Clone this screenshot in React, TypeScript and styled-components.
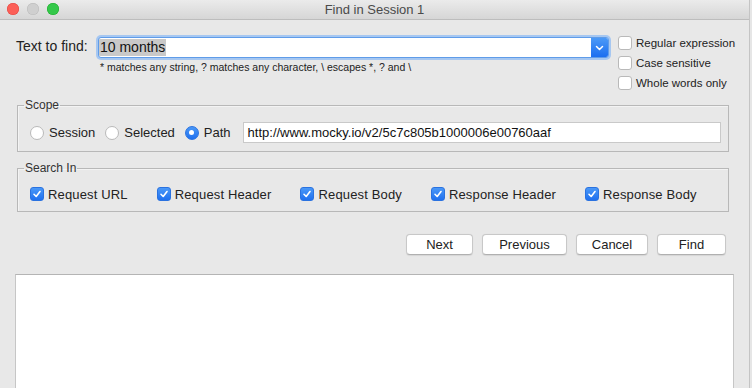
import React from 'react'
import styled, { createGlobalStyle } from 'styled-components'

const GlobalStyle = createGlobalStyle`
  html, body {
    margin: 0;
    padding: 0;
    background: #e6e6e6;
  }
  body {
    font-family: "Liberation Sans", Arial, sans-serif;
    color: #222;
  }
`

const Window = styled.div`
  width: 749px;
  height: 388px;
  display: flex;
  flex-direction: column;
  background: #e8e8e8;
  border-right: 1px solid #c4c4c4;
  overflow: hidden;
`

const TitleBar = styled.div`
  position: relative;
  height: 19px;
  flex: none;
  display: flex;
  align-items: center;
  justify-content: center;
  background: linear-gradient(#ebebeb, #d6d6d6);
  border-bottom: 1px solid #bdbdbd;

  .lights {
    position: absolute;
    left: 7px;
    top: 3px;
    display: flex;
    gap: 8px;
  }
`

const Light = styled.span<{ $color: string; $edge: string }>`
  width: 12px;
  height: 12px;
  border-radius: 50%;
  background: ${(p) => p.$color};
  box-shadow: inset 0 0 0 0.5px ${(p) => p.$edge};
`

const Title = styled.div`
  font-size: 13px;
  color: #4a4a4a;
`

const Body = styled.div`
  flex: 1;
  display: flex;
  flex-direction: column;
  padding: 15px 15px 0 15px;
  min-height: 0;
`

const TopRow = styled.div`
  height: 63px;
  display: flex;
  align-items: flex-start;
  flex: none;
  white-space: nowrap;
`

const FindLabel = styled.div`
  font-size: 14px;
  width: 80px;
  flex: none;
  padding: 3px 0 0 1px;
  color: #222;
`

const FieldColumn = styled.div`
  width: 515px;
  flex: none;
  display: flex;
  flex-direction: column;
`

const Combo = styled.div`
  height: 19px;
  margin: 2px;
  display: flex;
  align-items: stretch;
  background: #fff;
  border: 1px solid #5f9ce9;
  border-radius: 3px;
  box-shadow: 0 0 0 2px #a6c7f1;
  overflow: hidden;
`

const ComboText = styled.div`
  flex: 1;
  display: flex;
  align-items: center;

  span {
    font-size: 14px;
    line-height: 17px;
    background: #c9c9c9;
    color: #111;
    padding: 0 1px;
  }
`

const ComboButton = styled.div`
  width: 17px;
  display: flex;
  align-items: center;
  justify-content: center;
  background: linear-gradient(#4c9af7, #1b6ef0);
`

const Hint = styled.div`
  font-size: 10.5px;
  line-height: 12px;
  margin: 1px 0 0 4px;
  color: #222;
`

const Options = styled.div`
  margin: -2px 0 0 7px;
  flex: none;
  display: flex;
  flex-direction: column;
`

const OptionRow = styled.label`
  height: 20px;
  display: flex;
  align-items: center;
  gap: 4px;
  font-size: 11.5px;
  color: #222;
`

const Box = styled.span<{ $checked?: boolean }>`
  width: 14px;
  height: 14px;
  flex: none;
  box-sizing: border-box;
  border-radius: 3px;
  display: flex;
  align-items: center;
  justify-content: center;
  background: ${(p) => (p.$checked ? 'linear-gradient(#4a98f7, #1f70ef)' : '#fff')};
  border: 1px solid ${(p) => (p.$checked ? '#2a72e0' : '#b9b9b9')};
`

const Group = styled.fieldset<{ $top?: number }>`
  margin: ${(p) => p.$top ?? 0}px 5px 0 2px;
  padding: 10px 7px 8px 12px;
  border: 1px solid #b8b8b8;
  box-shadow: inset 1px 1px 0 #f3f3f3;
  flex: none;

  legend {
    font-size: 12px;
    line-height: 14px;
    padding: 0 1px;
    margin-left: -6px;
    color: #333;
  }
`

const ScopeRow = styled.div`
  display: flex;
  align-items: center;
  height: 21px;
`

const RadioItem = styled.label`
  display: flex;
  align-items: center;
  gap: 5px;
  font-size: 13px;
  margin-right: 10px;
  color: #222;
`

const Radio = styled.span<{ $on?: boolean }>`
  width: 14px;
  height: 14px;
  box-sizing: border-box;
  border-radius: 50%;
  display: flex;
  align-items: center;
  justify-content: center;
  background: ${(p) => (p.$on ? 'linear-gradient(#4a98f7, #1f70ef)' : '#fff')};
  border: 1px solid ${(p) => (p.$on ? '#2a72e0' : '#b9b9b9')};

  &::after {
    content: '';
    display: ${(p) => (p.$on ? 'block' : 'none')};
    width: 5px;
    height: 5px;
    border-radius: 50%;
    background: #fff;
  }
`

const PathField = styled.div`
  flex: 1;
  height: 21px;
  box-sizing: border-box;
  margin-left: 2px;
  padding-left: 4px;
  display: flex;
  align-items: center;
  background: #fff;
  border: 1px solid #c9c9c9;
  font-size: 13px;
  color: #111;
`

const CheckRow = styled.div`
  display: flex;
  align-items: center;
  gap: 29px;
  height: 18px;
`

const CheckItem = styled.label`
  display: flex;
  align-items: center;
  gap: 4px;
  font-size: 13px;
  letter-spacing: 0.15px;
  color: #222;
`

const ButtonRow = styled.div`
  display: flex;
  justify-content: flex-end;
  gap: 9px;
  margin: 22px 8px 0 0;
  flex: none;
`

const Button = styled.button<{ $w: number }>`
  width: ${(p) => p.$w}px;
  height: 21px;
  padding: 0;
  font-family: inherit;
  font-size: 13px;
  color: #222;
  background: #fff;
  border: 1px solid #c8c8c8;
  border-bottom-color: #b0b0b0;
  border-radius: 4px;
  box-shadow: 0 0.5px 1px rgba(0, 0, 0, 0.08);
`

const Output = styled.div`
  flex: 1;
  margin-top: 19px;
  background: #fff;
  border: 1px solid #c6c6c6;
  border-top-color: #b4b4b4;
  border-bottom: none;
`

const Check = () => (
  <svg width="10" height="10" viewBox="0 0 10 10">
    <path d="M2 5.3 L4.2 7.5 L8 2.5" stroke="#fff" strokeWidth="1.6" fill="none" strokeLinecap="round" strokeLinejoin="round" />
  </svg>
)

const searchIn = ['Request URL', 'Request Header', 'Request Body', 'Response Header', 'Response Body']
const buttons: [string, number][] = [
  ['Next', 67],
  ['Previous', 85],
  ['Cancel', 72],
  ['Find', 69],
]

export default function App() {
  return (
    <>
      <GlobalStyle />
      <Window>
        <TitleBar>
          <div className="lights">
            <Light $color="#fc5f57" $edge="#e0443e" />
            <Light $color="#cfcfcf" $edge="#b9b9b9" />
            <Light $color="#34c84a" $edge="#1aab29" />
          </div>
          <Title>Find in Session 1</Title>
        </TitleBar>
        <Body>
          <TopRow>
            <FindLabel>Text to find:</FindLabel>
            <FieldColumn>
              <Combo>
                <ComboText>
                  <span>10 months</span>
                </ComboText>
                <ComboButton>
                  <svg width="9" height="6" viewBox="0 0 9 6">
                    <path d="M1.5 1.5 L4.5 4.5 L7.5 1.5" stroke="#fff" strokeWidth="1.5" fill="none" strokeLinecap="round" strokeLinejoin="round" />
                  </svg>
                </ComboButton>
              </Combo>
              <Hint>* matches any string, ? matches any character, \ escapes *, ? and \</Hint>
            </FieldColumn>
            <Options>
              <OptionRow>
                <Box />
                Regular expression
              </OptionRow>
              <OptionRow>
                <Box />
                Case sensitive
              </OptionRow>
              <OptionRow>
                <Box />
                Whole words only
              </OptionRow>
            </Options>
          </TopRow>

          <Group>
            <legend>Scope</legend>
            <ScopeRow>
              <RadioItem>
                <Radio />
                Session
              </RadioItem>
              <RadioItem>
                <Radio />
                Selected
              </RadioItem>
              <RadioItem>
                <Radio $on />
                Path
              </RadioItem>
              <PathField>http://www.mocky.io/v2/5c7c805b1000006e00760aaf</PathField>
            </ScopeRow>
          </Group>

          <Group $top={9}>
            <legend>Search In</legend>
            <CheckRow>
              {searchIn.map((s) => (
                <CheckItem key={s}>
                  <Box $checked>
                    <Check />
                  </Box>
                  {s}
                </CheckItem>
              ))}
            </CheckRow>
          </Group>

          <ButtonRow>
            {buttons.map(([label, w]) => (
              <Button key={label} $w={w}>
                {label}
              </Button>
            ))}
          </ButtonRow>

          <Output />
        </Body>
      </Window>
    </>
  )
}
